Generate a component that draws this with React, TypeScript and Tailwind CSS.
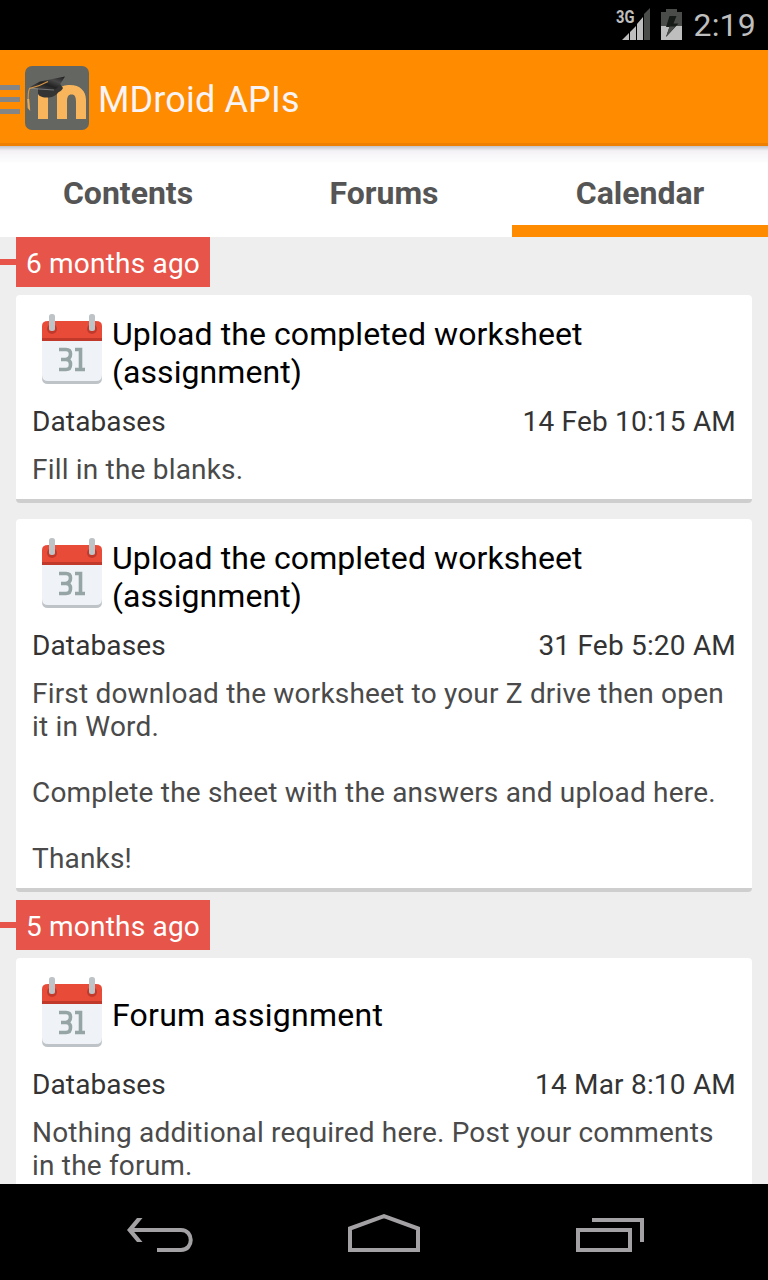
import React from "react";

function StatusBar() {
  return (
    <div className="flex h-[50px] shrink-0 items-center justify-end bg-black pr-3 text-[#bebebe]">
      <svg width="80" height="50" viewBox="613 0 80 50" className="shrink-0">
        <text x="616" y="23" fontSize="18" fontWeight="700" fill="#bebebe" textLength="18.500" lengthAdjust="spacingAndGlyphs">3G</text>
        <path d="M644 14l6-6v32h-6z" fill="#4a4c4a" />
        <path d="M622 40l7-7v7zM630 32l6-6v14h-6zM637 24l6-7v23h-6z" fill="#bebebe" />
        <path d="M661 12h5V9h11v3h5v28h-21z" fill="#4a4c4a" />
        <path d="M661 26h21v14h-21z" fill="#bebebe" />
        <path d="M669.500 16h7l-3 7.500h5L666 37l3.500-10H666z" fill="#171b18" />
        <path d="M666 37l3.500-10.500h6z" fill="#4a4c4a" />
      </svg>
      <span className="text-[32px] leading-[50px] tracking-[0.2px]">2:19</span>
    </div>
  );
}

function MoodleLogo() {
  return (
    <svg width="64" height="64" viewBox="0 0 64 64" className="ml-[5px] shrink-0">
      <defs>
        <linearGradient id="cap" x1="0" y1="1" x2="1" y2="0">
          <stop offset="0" stopColor="#555" />
          <stop offset="0.45" stopColor="#222" />
          <stop offset="0.7" stopColor="#484848" />
          <stop offset="1" stopColor="#1b1b1b" />
        </linearGradient>
      </defs>
      <rect width="64" height="64" rx="7" fill="#646661" />
      <path d="M13 28h10v25H13zM32 53V24c4-4 8-5 13-5 10 0 16 6 16 15v19H51V36c0-5-1-7.500-4.500-7.500S42 31 42 36v17z" fill="#f8b55b" />
      <path d="M13 22l22-4 3 4c-2 4-4 3-6 6-3 3-7 3.500-11 3.500-4 0-8-2-8-4z" fill="#343434" />
      <path d="M4 21.500l11-6 25-5-6 9.500c-2 3-5 4-8 4z" fill="url(#cap)" />
      <path d="M4 22l10 1 15 1" fill="none" stroke="#929292" strokeWidth="0.7" />
      <path d="M23 15.500Q15 20 4.500 22.500C2.500 27 3 32 3.500 37" fill="none" stroke="#d89545" strokeWidth="1.100" />
      <path d="M2.200 33h2l1 12-2.500-3z" fill="#e6aa59" />
    </svg>
  );
}

function ActionBar() {
  return (
    <div className="flex h-24 shrink-0 items-center border-b-[3px] border-[#ee7f00] bg-[#ff8b00] pt-[3px]">
      <div className="flex w-5 shrink-0 flex-col gap-[7px] pt-[3px]">
        <div className="h-[5px] bg-[#858585]" />
        <div className="h-[5px] bg-[#858585]" />
        <div className="h-[5px] bg-[#858585]" />
      </div>
      <MoodleLogo />
      <h1 className="ml-[9px] pt-1 text-[36px] leading-[42px] tracking-[0.15px] text-[#f8f3f5]">MDroid APIs</h1>
    </div>
  );
}

function Tabs() {
  const tabs = ["Contents", "Forums", "Calendar"];
  return (
    <div className="grid h-[91px] shrink-0 grid-cols-3 bg-linear-to-b from-[#c4c4c8] via-[#f4f2f6] via-[5px] to-white to-[18px]">
      {tabs.map((t) => (
        <div
          key={t}
          className={
            t === "Calendar"
              ? "border-b-12 border-[#ff8b00] pt-7 text-center text-[32px] leading-[38px] font-bold text-[#545554]"
              : "border-b-12 border-transparent pt-7 text-center text-[32px] leading-[38px] font-bold text-[#545554]"
          }
        >
          {t}
        </div>
      ))}
    </div>
  );
}

function SectionLabel({ children }: { children: string }) {
  return (
    <div className="mb-2 flex h-[50px] shrink-0">
      <div className="mt-[22px] h-1.5 w-4 bg-[#e7554a]" />
      <div className="w-[194px] bg-[#e7554a] pt-2.5 pl-2.5 text-[28px] leading-[33px] tracking-[0.2px] whitespace-nowrap text-white">{children}</div>
    </div>
  );
}

function CalendarIcon() {
  return (
    <svg width="60" height="71" viewBox="0 0 60 71" className="ml-[10px] shrink-0">
      <path d="M0 60h60v4q0 6-6 6H6q-6 0-6-6z" fill="#bdc3c7" />
      <path d="M0 26h60v35q0 6-6 6H6q-6 0-6-6z" fill="#eff2f7" />
      <path d="M0 26V12q0-5 6-5h48q6 0 6 5v14z" fill="#e94b39" />
      <path d="M0 24h60v3H0z" fill="#c1392b" />
      <circle cx="10" cy="15" r="5" fill="#c1392b" />
      <circle cx="50" cy="15" r="5" fill="#c1392b" />
      <rect x="7" y="0" width="6" height="17" rx="2.5" fill="#bdc3c7" />
      <rect x="47" y="0" width="6" height="17" rx="2.5" fill="#bdc3c7" />
      <path d="M17 35.500h7q4.500 0 4.500 4.500t-4.500 5.500h-5m5 0q4.500 0 4.500 5t-4.500 5H17M33 35.500h5.500v20M33 55.500h10" fill="none" stroke="#95a5a6" strokeWidth="3.600" />
    </svg>
  );
}

type EventProps = { title: string; subtitle?: string; date: string; children: React.ReactNode };

function EventCard({ title, subtitle, date, children }: EventProps) {
  return (
    <article className="mx-4 shrink-0 rounded-[4px] border-b-4 border-[#cecece] bg-white px-4 pt-[19px] pb-[13px]">
      <div className="flex h-[91px] items-start">
        <CalendarIcon />
        <h2
          className={
            subtitle
              ? "ml-[10px] flex h-[77px] flex-col justify-center text-[32px] leading-[38px] tracking-[0.08px] whitespace-nowrap text-black"
              : "ml-[10px] flex h-[75px] flex-col justify-center text-[32px] leading-[38px] tracking-[0.25px] whitespace-nowrap text-black"
          }
        >
          <span>{title}</span>
          {subtitle && <span>{subtitle}</span>}
        </h2>
      </div>
      <div className="flex justify-between text-[28px] leading-[33px] text-[#333]">
        <span className="tracking-[0.13px]">Databases</span>
        <span className="tracking-[0.2px]">{date}</span>
      </div>
      <div className="mt-[15px] text-[28px] leading-[33px] tracking-[0.19px] whitespace-nowrap text-[#4a4a4a]">{children}</div>
    </article>
  );
}

function NavigationBar() {
  return (
    <nav className="flex h-24 shrink-0 items-center bg-black">
      <svg width="768" height="96" viewBox="0 0 768 96" fill="none" stroke="#a3a1a3" strokeWidth="4">
        <path d="M130 46h51c13 0 13 20 0 20h-24" />
        <path d="M137 34h5.500l-10 12 10 12H137l-10-12z" fill="#a3a1a3" stroke="none" />
        <path d="M350 44.500L384 32.200l34 12.300V66h-68z" />
        <path d="M578 46h52v20h-52zM592 36h50v22" />
      </svg>
    </nav>
  );
}

export default function App() {
  return (
    <div className="flex h-[1280px] w-[768px] flex-col overflow-hidden bg-[#eee] font-['Roboto',sans-serif]">
      <StatusBar />
      <ActionBar />
      <Tabs />
      <main className="flex min-h-0 flex-1 flex-col overflow-hidden">
        <SectionLabel>6 months ago</SectionLabel>
        <EventCard title="Upload the completed worksheet" subtitle="(assignment)" date="14 Feb 10:15 AM">
          Fill in the blanks.
        </EventCard>
        <div className="h-4 shrink-0" />
        <EventCard title="Upload the completed worksheet" subtitle="(assignment)" date="31 Feb 5:20 AM">
          First download the worksheet to your Z drive then open<br />it in Word.<br /><br />
          Complete the sheet with the answers and upload here.<br /><br />
          Thanks!
        </EventCard>
        <div className="h-2 shrink-0" />
        <SectionLabel>5 months ago</SectionLabel>
        <EventCard title="Forum assignment" date="14 Mar 8:10 AM">
          Nothing additional required here. Post your comments<br />in the forum.
        </EventCard>
      </main>
      <NavigationBar />
    </div>
  );
}
